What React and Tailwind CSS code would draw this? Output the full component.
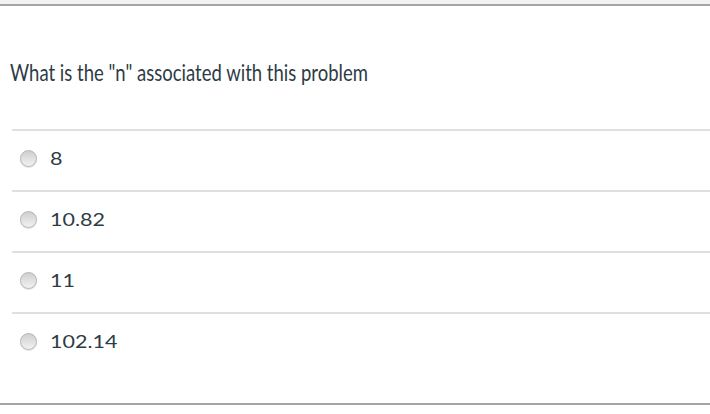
import React from "react";

function Radio() {
  return (
    <span className="inline-block w-[17px] h-[17px] rounded-full border border-[#b4b4b4] bg-gradient-to-b from-[#cfcfcf] to-[#f2f2f2] shadow-[0_1px_1px_rgba(0,0,0,0.12)] shrink-0" />
  );
}

export default function App() {
  const options = ["8", "10.82", "11", "102.14"];
  return (
    <div className="w-[710px] h-[414px] bg-white overflow-hidden" style={{ fontFamily: "Lato, 'Open Sans', sans-serif" }}>
      <div className="h-[4px] bg-[#f2f2f2]" />
      <div className="border-t-2 border-[#a5a5a5]" />
      <div className="h-[123px] flex items-center pl-[10px] pt-[9px]">
        <span className="inline-block origin-center scale-y-[1.3] text-[18.5px] leading-none text-[#2d3b45]">What is the "n" associated with this problem</span>
      </div>
      <div className="ml-[12px]">
        {options.map((o, i) => (
          <div key={i} className="h-[61px] border-t-2 border-[#e0e0e0] flex items-center gap-[13px] pl-[8px] pb-[4px]">
            <Radio />
            <span className="inline-block origin-center scale-y-[0.84] text-[21.5px] leading-none text-[#2d3b45]">{o}</span>
          </div>
        ))}
      </div>
      <div className="h-[30px]" />
      <div className="border-t-2 border-[#a5a5a5]" />
    </div>
  );
}
